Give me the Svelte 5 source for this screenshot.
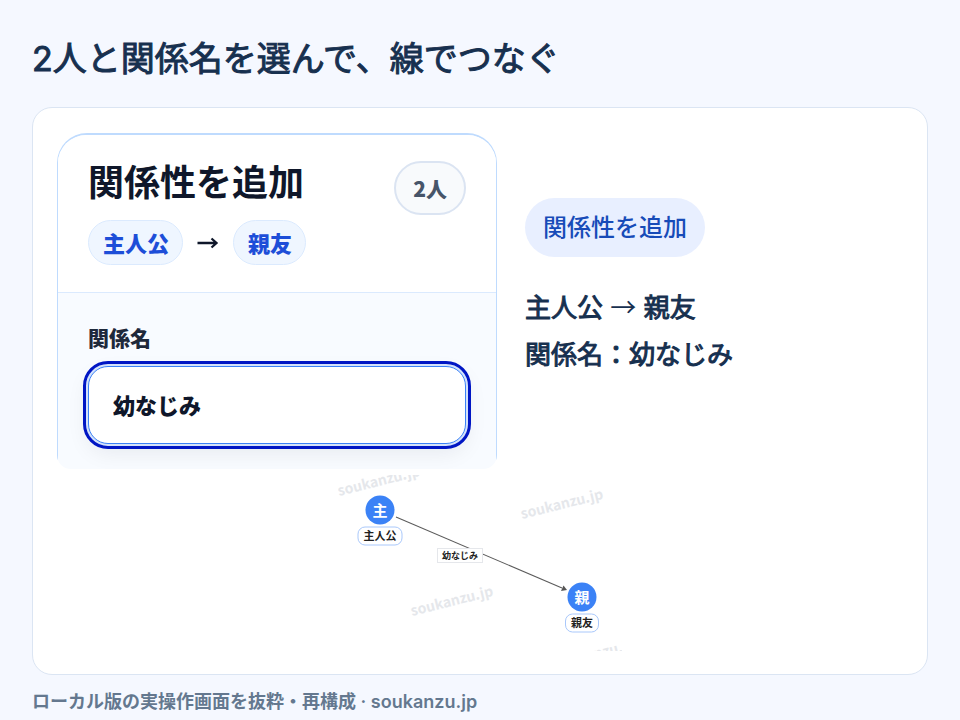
<script>
  const from = '主人公';
  const to = '親友';
  let relation = $state('幼なじみ');

  const people = [
    { name: from, x: 42, y: 35, width: 44 },
    { name: to, x: 244, y: 122, width: 33 }
  ];
  const watermarks = [
    { x: 1, y: 21 },
    { x: 184, y: 44 },
    { x: 74, y: 141 },
    { x: 217, y: 194 }
  ];
</script>

<div class="page">
  <h1>2人と関係名を選んで、線でつなぐ</h1>

  <main>
    <div class="columns">
      <form onsubmit={(e) => e.preventDefault()}>
        <header>
          <div class="title-row">
            <h2>関係性を追加</h2>
            <span class="count">2人</span>
          </div>
          <div class="pair">
            <span class="chip">{from}</span>
            <svg width="22" height="14" viewBox="0 0 22 14" aria-hidden="true">
              <path d="M0.500 7H19M14.500 2.500L19.500 7L14.500 11.500" fill="none" stroke="#0f172a" stroke-width="2.3" />
            </svg>
            <span class="chip">{to}</span>
          </div>
        </header>
        <div class="field">
          <label for="relation">関係名</label>
          <input id="relation" type="text" bind:value={relation} />
        </div>
      </form>

      <section class="summary">
        <button type="button">関係性を追加</button>
        <p>{from} <span class="arrow">→</span> {to}<br />関係名：{relation}</p>
      </section>
    </div>

    <svg class="diagram" width="284" height="176" viewBox="0 0 284 176" role="img" aria-label="相関図">
      {#each watermarks as mark}
        <text class="mark" transform="translate({mark.x} {mark.y}) rotate(-14)">soukanzu.jp</text>
      {/each}
      <path d="M58 42L224 113" stroke="#5b5b5b" stroke-width="1.1" />
      <path d="M229 115L223 116L225.500 110.500Z" fill="#555" />
      <rect x="99.500" y="73.500" width="45" height="14" fill="#fff" stroke="#e5e7eb" />
      <text class="edge" x="122" y="84">{relation}</text>
      {#each people as person}
        <circle cx={person.x} cy={person.y} r="14.500" fill="#3b82f6" />
        <text class="initial" x={person.x} y={person.y + 6}>{person.name[0]}</text>
        <rect x={person.x - person.width / 2} y={person.y + 17} width={person.width} height="18" rx="7" fill="#fff" stroke="#a9c8fb" />
        <text class="name" x={person.x} y={person.y + 30}>{person.name}</text>
      {/each}
    </svg>
  </main>

  <footer>ローカル版の実操作画面を抜粋・再構成 · soukanzu.jp</footer>
</div>

<style>
  :global(body) {
    margin: 0;
    background: #f5f8ff;
  }
  .page {
    box-sizing: border-box;
    min-height: 100vh;
    display: flex;
    flex-direction: column;
    padding: 33px 32px 4px;
    color: #17304f;
    font-family: "Inter", "Noto Sans CJK JP", sans-serif;
  }
  h1 {
    margin: 0 0 22px;
    font-size: 34px;
    line-height: 52px;
    font-weight: 400;
    -webkit-text-stroke: 1px;
  }
  main {
    flex: 1;
    padding: 25px 24px 22px;
    background: #fff;
    border: 1px solid #dbe5f3;
    border-radius: 20px;
  }
  .columns {
    display: grid;
    grid-template-columns: 440fr 378fr;
    gap: 28px;
    align-items: center;
  }
  form {
    border: 1px solid #bfdbfe;
    border-top-width: 2px;
    border-bottom: 0;
    border-radius: 30px 30px 0 0;
    clip-path: inset(0 round 0 0 14px 14px);
    background: #f8fbff;
    color: #0f172a;
    font-family: "Noto Sans CJK JP", sans-serif;
    font-weight: 900;
  }
  header {
    padding: 26px 30px 27px;
    background: #fff;
    border-bottom: 1px solid #dbeafe;
    border-radius: 28px 28px 0 0;
  }
  .title-row {
    display: flex;
    justify-content: space-between;
  }
  h2 {
    margin: 0;
    font-size: 36px;
    line-height: 38px;
    font-weight: 700;
  }
  .count {
    padding: 0 17px;
    border: 2px solid #dbe4f2;
    border-radius: 27px;
    background: #f8fafc;
    color: #475569;
    font-size: 21px;
    line-height: 50px;
  }
  .pair {
    display: flex;
    align-items: center;
    gap: 14px;
    margin-top: 5px;
  }
  .chip {
    padding: 0 13px 0 14px;
    border: 1px solid #dbeafe;
    border-radius: 23px;
    background: #eff6ff;
    color: #1d4ed8;
    font-size: 22px;
    line-height: 43px;
  }
  .field {
    padding: 30px 30px 25px;
  }
  label {
    display: block;
    margin-bottom: 15px;
    color: #1e293b;
    font-size: 21px;
    line-height: 28px;
  }
  input {
    display: block;
    box-sizing: border-box;
    width: 100%;
    height: 78px;
    padding: 0 24px 2px;
    border: 1px solid #3b82f6;
    border-radius: 20px;
    outline: 3px solid #0016c4;
    outline-offset: 2px;
    background: #fff;
    box-shadow: 0 0 0 4px #d3e2fb, 0 8px 22px rgb(15 23 42 / 8%);
    color: #0f172a;
    font: 900 22px "Noto Sans CJK JP", sans-serif;
  }
  button {
    padding: 0 18px 4px;
    border: 0;
    border-radius: 30px;
    background: #e8efff;
    color: #174bb8;
    font: 500 24px/55px "Noto Sans CJK JP", sans-serif;
  }
  .summary {
    padding-bottom: 26px;
  }
  .summary p {
    margin: 25px 0 0;
    font-size: 26px;
    line-height: 47px;
    -webkit-text-stroke: 1px;
  }
  .arrow {
    font-family: "Noto Sans CJK JP", sans-serif;
    -webkit-text-stroke: 0;
  }
  .diagram {
    display: block;
    margin: 6px auto 0;
    font-family: "Noto Sans CJK JP", sans-serif;
    font-weight: 700;
    text-anchor: middle;
  }
  .mark {
    fill: #e5e7eb;
    font-size: 14px;
    text-anchor: start;
  }
  .edge {
    fill: #222;
    font-size: 9px;
  }
  .initial {
    fill: #fff;
    font-size: 15px;
  }
  .name {
    fill: #222;
    font-size: 11px;
  }
  footer {
    margin-top: 13px;
    color: #64788f;
    font-size: 18px;
    line-height: 28px;
    font-weight: 600;
  }
</style>
